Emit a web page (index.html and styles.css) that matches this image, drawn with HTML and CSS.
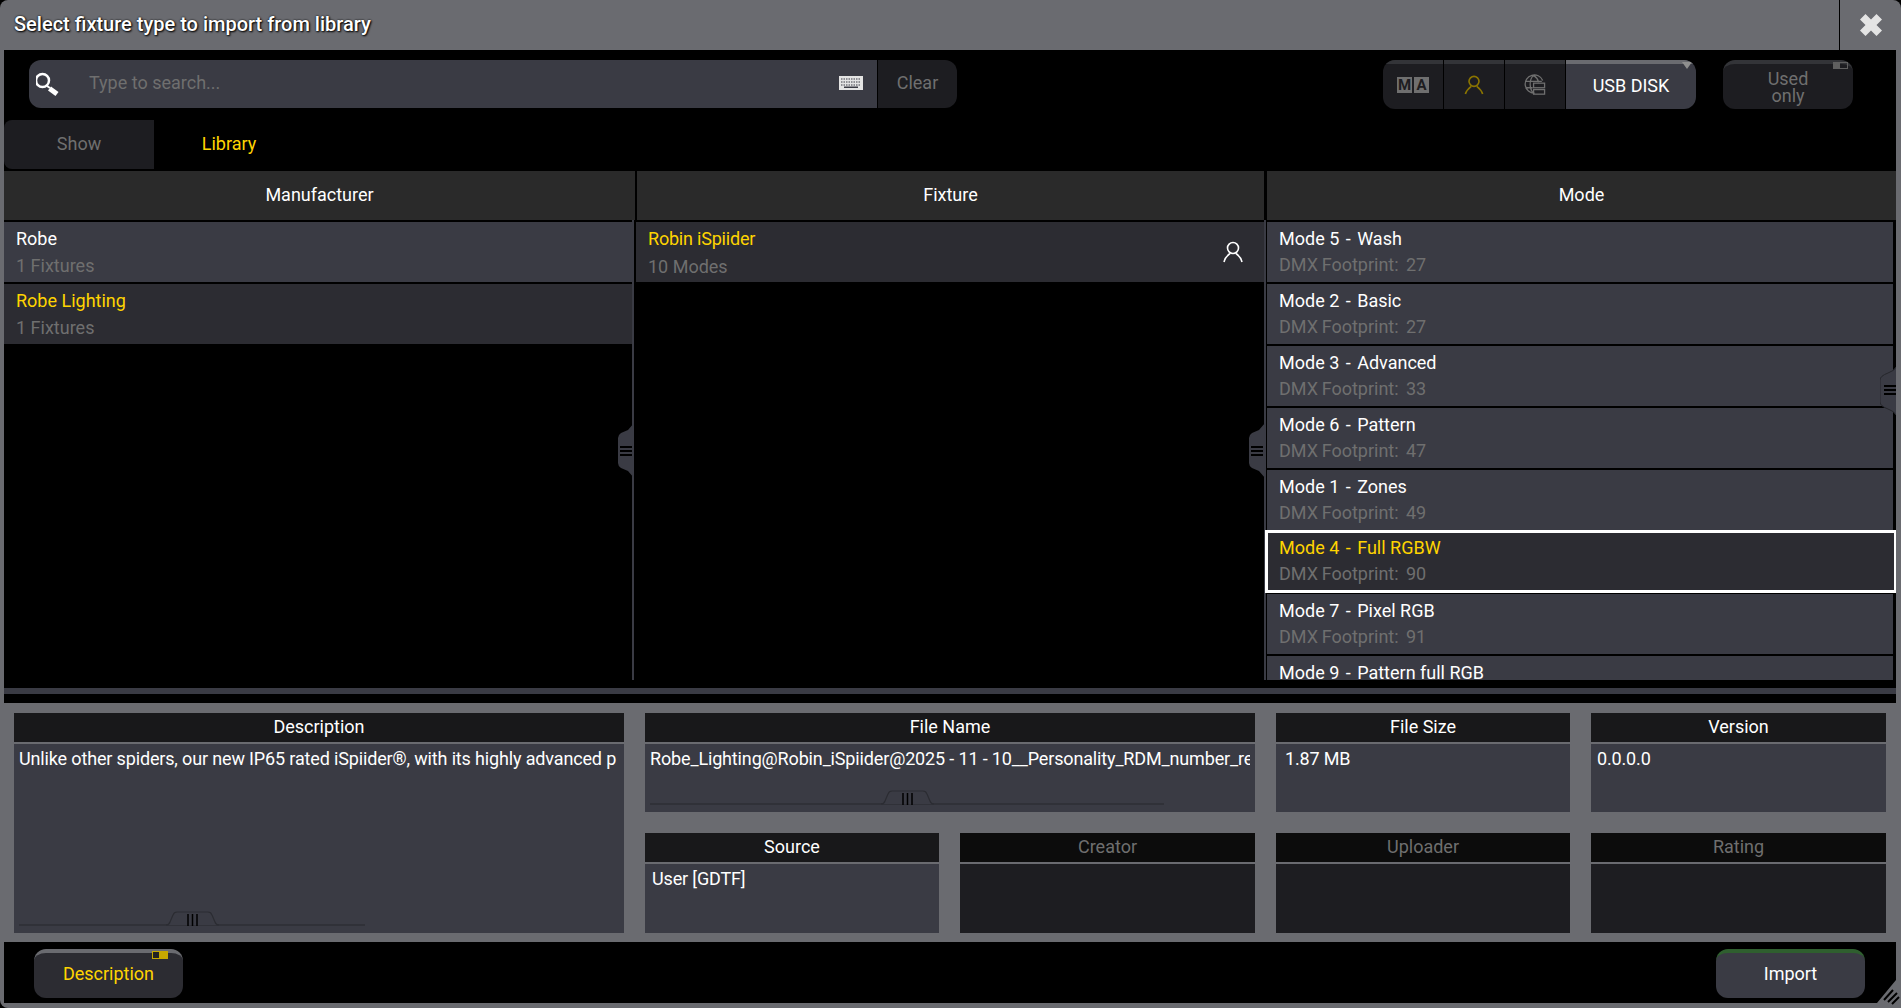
FILE: index.html
```html
<!DOCTYPE html>
<html lang="en">
<head>
    <meta charset="UTF-8">
    <meta name="viewport" content="width=device-width, initial-scale=1.0">
    <title>Select fixture type</title>
    <link rel="stylesheet" href="styles.css">
</head>
<body>
    <div class="window">
        <div class="titlebar">
            <div class="title">Select fixture type to import from library</div>
            <div class="close">
                <svg width="22" height="22" viewBox="0 0 24 24"><path d="M6 0 L12 6 L18 0 L24 6 L18 12 L24 18 L18 24 L12 18 L6 24 L0 18 L6 12 L0 6 Z" fill="#e4e4e4"/></svg>
            </div>
        </div>

        <div class="content">
            <!-- Search and source selector -->
            <div class="toolbar">
                <div class="search">
                    <div class="search-field">
                        <svg class="search-icon" width="24" height="26" viewBox="0 0 24 26"><circle cx="6.500" cy="9.500" r="6.500" fill="none" stroke="#fff" stroke-width="2.500"/><path d="M11 15 L14 17" stroke="#fff" stroke-width="2"/><path d="M13.500 17.500 L21 23" stroke="#fff" stroke-width="5"/></svg>
                        <span class="placeholder">Type to search...</span>
                        <svg class="keyboard" width="24" height="14" viewBox="0 0 24 14">
                            <rect width="24" height="14" fill="#e4e4e4"/>
                            <path d="M2 3 H22 M2 6 H22 M2 9 H22" stroke="#3a3b44" stroke-width="1" stroke-dasharray="1.500 1"/>
                            <rect x="5" y="10.500" width="14" height="1.500" fill="#3a3b44"/>
                        </svg>
                    </div>
                    <div class="clear">Clear</div>
                </div>
                <div class="sources">
                    <div class="source source-ma"><span class="ma-box">M</span><span class="ma-box">A</span></div>
                    <div class="source">
                        <svg width="20" height="20" viewBox="0 0 22 22" fill="none" stroke="#8a7400" stroke-width="1.800"><circle cx="11" cy="7" r="5.500"/><path d="M1.500 21 C3 16 6 14 8 12.500 M20.500 21 C19 16 16 14 14 12.500"/></svg>
                    </div>
                    <div class="source source-globe">
                        <svg width="23" height="22" viewBox="0 0 24 24" fill="none" stroke="#6f6f6f" stroke-width="1.400"><path d="M12 21 A10 10 0 1 1 21 7 M2 8 H20 M2 15 H10 M11 1.500 C6 6 6 16 11 21 M11 1.500 C15 4 16 7 16.500 9"/><rect x="11" y="10" width="12" height="5"/><rect x="11" y="17" width="12" height="5"/></svg>
                    </div>
                    <div class="source source-usb">USB DISK<span class="dropdown-mark"></span></div>
                </div>
                <div class="used-only">Used<br>only<span class="toggle-mark"></span></div>
            </div>

            <!-- Show and library tabs -->
            <div class="tabs">
                <div class="tab">Show</div>
                <div class="tab tab-active">Library</div>
            </div>

            <!-- Manufacturer, fixture and mode lists -->
            <div class="lists">
                <div class="col col-manufacturer">
                    <div class="col-head">Manufacturer</div>
                    <div class="row"><div class="row-name">Robe</div><div class="row-sub">1 Fixtures</div></div>
                    <div class="row row-current"><div class="row-name">Robe Lighting</div><div class="row-sub">1 Fixtures</div></div>
                    <svg class="handle" width="16" height="55" viewBox="0 0 16 55">
                        <path d="M16 0 L10 7 L3 10 Q0 12 0 15 V40 Q0 43 3 45 L10 48 L16 55 Z" fill="#3a3b44"/>
                        <path d="M2 24 H14 M2 28 H14 M2 32 H14" stroke="#000" stroke-width="2"/>
                    </svg>
                </div>
                <div class="col col-fixture">
                    <div class="col-head">Fixture</div>
                    <div class="row row-current">
                        <div class="row-name">Robin iSpiider</div><div class="row-sub">10 Modes</div>
                        <svg class="row-user" width="22" height="22" viewBox="0 0 22 22" fill="none" stroke="#fff" stroke-width="1.600"><circle cx="11" cy="7" r="5.500"/><path d="M2 21 C3 16 6 14 8 12.500 M20 21 C19 16 16 14 14 12.500"/></svg>
                    </div>
                    <svg class="handle" width="16" height="55" viewBox="0 0 16 55">
                        <path d="M16 0 L10 7 L3 10 Q0 12 0 15 V40 Q0 43 3 45 L10 48 L16 55 Z" fill="#3a3b44"/>
                        <path d="M2 24 H14 M2 28 H14 M2 32 H14" stroke="#000" stroke-width="2"/>
                    </svg>
                </div>
                <div class="col col-mode">
                    <div class="col-head">Mode</div>
                    <div class="row"><div class="row-name">Mode 5 <span class="dash">-</span> Wash</div><div class="row-sub">DMX Footprint: &nbsp;27</div></div>
                    <div class="row"><div class="row-name">Mode 2 <span class="dash">-</span> Basic</div><div class="row-sub">DMX Footprint: &nbsp;27</div></div>
                    <div class="row"><div class="row-name">Mode 3 <span class="dash">-</span> Advanced</div><div class="row-sub">DMX Footprint: &nbsp;33</div></div>
                    <div class="row"><div class="row-name">Mode 6 <span class="dash">-</span> Pattern</div><div class="row-sub">DMX Footprint: &nbsp;47</div></div>
                    <div class="row"><div class="row-name">Mode 1 <span class="dash">-</span> Zones</div><div class="row-sub">DMX Footprint: &nbsp;49</div></div>
                    <div class="row row-selected"><div class="row-name">Mode 4 <span class="dash">-</span> Full RGBW</div><div class="row-sub">DMX Footprint: &nbsp;90</div></div>
                    <div class="row"><div class="row-name">Mode 7 <span class="dash">-</span> Pixel RGB</div><div class="row-sub">DMX Footprint: &nbsp;91</div></div>
                    <div class="row"><div class="row-name">Mode 9 <span class="dash">-</span> Pattern full RGB</div></div>
                    <svg class="handle handle-mode" width="16" height="48" viewBox="0 0 16 48">
                        <path d="M16 0 Q14 4 8 6 Q0 9 0 13 V35 Q0 39 8 42 Q14 44 16 48" fill="#3a3b44" stroke="#26272c" stroke-width="1"/>
                        <path d="M4 19 H16 M4 23 H16 M4 27 H16" stroke="#000" stroke-width="2"/>
                    </svg>
                </div>
            </div>

            <div class="splitter"></div>

            <!-- Details -->
            <div class="details">
                <div class="info info-desc">
                    <div class="info-head">Description</div>
                    <div class="info-body">
                        <div class="info-text">Unlike other spiders, our new IP65 rated iSpiider®, with its highly advanced p</div>
                        <div class="scroller scroller-desc">
                            <svg class="grip" width="53" height="15" viewBox="0 0 53 15">
                                <path d="M0 14 Q3 14 4 11 L7 4 Q8 1 11 1 H42 Q45 1 46 4 L49 11 Q50 14 53 14" fill="#3a3b44" stroke="#2b2c32" stroke-width="1.200"/>
                                <path d="M22 3 V15 M26.500 3 V15 M31 3 V15" stroke="#000" stroke-width="1.500"/>
                            </svg>
                        </div>
                    </div>
                </div>
                <div class="info info-file">
                    <div class="info-head">File Name</div>
                    <div class="info-body">
                        <div class="info-text">Robe_Lighting@Robin_iSpiider@2025 - 11 - 10__Personality_RDM_number_re</div>
                        <div class="scroller scroller-file">
                            <svg class="grip" width="53" height="15" viewBox="0 0 53 15">
                                <path d="M0 14 Q3 14 4 11 L7 4 Q8 1 11 1 H42 Q45 1 46 4 L49 11 Q50 14 53 14" fill="#3a3b44" stroke="#2b2c32" stroke-width="1.200"/>
                                <path d="M22 3 V15 M26.500 3 V15 M31 3 V15" stroke="#000" stroke-width="1.500"/>
                            </svg>
                        </div>
                    </div>
                </div>
                <div class="info info-size">
                    <div class="info-head">File Size</div>
                    <div class="info-body"><div class="info-text">1.87 MB</div></div>
                </div>
                <div class="info info-version">
                    <div class="info-head">Version</div>
                    <div class="info-body"><div class="info-text">0.0.0.0</div></div>
                </div>
                <div class="info info-source">
                    <div class="info-head">Source</div>
                    <div class="info-body"><div class="info-text">User [GDTF]</div></div>
                </div>
                <div class="info info-off info-creator">
                    <div class="info-head">Creator</div>
                    <div class="info-body"></div>
                </div>
                <div class="info info-off info-uploader">
                    <div class="info-head">Uploader</div>
                    <div class="info-body"></div>
                </div>
                <div class="info info-off info-rating">
                    <div class="info-head">Rating</div>
                    <div class="info-body"></div>
                </div>
            </div>

            <!-- Bottom buttons -->
            <div class="footer">
                <div class="btn btn-desc">Description<span class="toggle-on"></span></div>
                <div class="btn btn-import">Import</div>
            </div>
        </div>
        <svg class="resize" width="26" height="28" viewBox="0 0 26 28">
            <path d="M26 0 V28 H0 V23 H2 L21 0 Z" fill="#6a6b70"/>
            <path d="M9 20 L18 10 M13 22 L22 13 M17 24 L24 17" stroke="#000" stroke-width="2"/>
        </svg>
    </div>
</body>
</html>
```
FILE: styles.css
```css
/* Basic Reset */
* {
    margin: 0;
    padding: 0;
    box-sizing: border-box;
}

html, body {
    height: 100%;
    overflow: hidden;
    background-color: #000;
}

body {
    font-family: "Roboto", "Liberation Sans", sans-serif;
    font-size: 18px;
    color: #fff;
}

/* Window */
.window {
    position: relative;
    display: flex;
    flex-direction: column;
    width: 1901px;
    height: 1008px;
    background-color: #6a6b70;
    border-radius: 8px 8px 0 8px;
    padding: 0 5px 5px 4px;
}

.titlebar {
    display: flex;
    height: 50px;
    margin-right: -5px;
    flex-shrink: 0;
}

.title {
    flex: 1;
    padding-left: 10px;
    line-height: 48px;
    font-size: 20px;
    font-weight: 500;
    text-shadow: 0 0 2px #000, 1px 1px 2px #000;
}

.close {
    width: 62px;
    display: flex;
    align-items: center;
    justify-content: center;
    border-left: 1px solid #000;
}

.content {
    flex: 1;
    display: flex;
    flex-direction: column;
    background-color: #000;
}

/* Toolbar */
.toolbar {
    display: flex;
    height: 70px;
    padding: 10px 43px 0 25px;
}

.search {
    display: flex;
    width: 928px;
    height: 48px;
}

.search-field {
    flex: 1;
    display: flex;
    align-items: center;
    background-color: #3a3b44;
    border-radius: 12px 0 0 12px;
    padding: 0 14px 0 7px;
}

.search-icon {
    margin-right: 29px;
}

.placeholder {
    flex: 1;
    margin-bottom: 3px;
    color: #6f6f6f;
}

.keyboard {
    margin-bottom: 2px;
}

.clear {
    width: 79px;
    margin-left: 1px;
    background-color: #1d1d21;
    border-radius: 0 12px 12px 0;
    color: #6f6f6f;
    line-height: 46px;
    text-align: center;
}

.sources {
    display: flex;
    margin-left: auto;
    height: 49px;
    border-radius: 12px;
    overflow: hidden;
}

.source {
    position: relative;
    display: flex;
    align-items: center;
    justify-content: center;
    width: 60px;
    margin-right: 1px;
    padding-bottom: 3px;
    background-color: #1d1d21;
    border-top: 4px solid #333438;
}

.source-ma {
    padding-bottom: 4px;
}

.source-globe {
    padding-right: 2px;
}

.source-usb {
    width: 130px;
    margin-right: 0;
    background-color: #3a3b44;
    border-top-color: #6a6b70;
}

.dropdown-mark {
    position: absolute;
    top: -2px;
    right: 4px;
    border-left: 5px solid transparent;
    border-right: 5px solid transparent;
    border-top: 7px solid #8f8f8f;
}

.ma-box {
    width: 15px;
    height: 16px;
    margin: 0 1px;
    background-color: #6f6f6f;
    color: #1d1d21;
    font-size: 15px;
    font-weight: 700;
    line-height: 16px;
    text-align: center;
}

.used-only {
    position: relative;
    width: 130px;
    height: 49px;
    margin-left: 27px;
    padding-top: 6px;
    background-color: #1d1d21;
    border-top: 4px solid #333438;
    border-radius: 12px;
    color: #6f6f6f;
    line-height: 17px;
    text-align: center;
}

.toggle-mark {
    position: absolute;
    top: -2px;
    right: 5px;
    width: 15px;
    height: 7px;
    border: 1px solid #5f5f5f;
    border-left-width: 7px;
}

/* Tabs */
.tabs {
    display: flex;
    height: 49px;
    margin-bottom: 2px;
}

.tab {
    width: 150px;
    line-height: 48px;
    text-align: center;
    color: #6f6f6f;
    background-color: #1d1d21;
    border-radius: 8px 0 0 8px;
}

.tab-active {
    background: none;
    color: #ffd400;
}

/* Lists */
.lists {
    display: flex;
    height: 509px;
    overflow: hidden;
}

.col {
    position: relative;
    display: flex;
    flex-direction: column;
    gap: 2px;
}

.col-manufacturer {
    width: 630px;
    border-right: 2px solid #3a3b44;
}

.col-fixture {
    width: 632px;
    border-right: 2px solid #3a3b44;
}

.col-mode {
    flex: 1;
}

.col-head {
    flex-shrink: 0;
    height: 49px;
    background-color: #2a2a2a;
    line-height: 47px;
    text-align: center;
}

.col-manufacturer .col-head {
    margin-right: -3px;
}

.col-fixture .col-head {
    margin: 0 -2px 0 3px;
    border-right: 2px solid #000;
}

.col-mode .col-head {
    margin-left: 1px;
}

.row {
    position: relative;
    flex-shrink: 0;
    height: 60px;
    padding: 6px 12px 0;
    background-color: #3a3b44;
}

.col-fixture .row {
    margin-left: 2px;
}

.col-fixture .row-name {
    letter-spacing: -0.2px;
}

.col-fixture .row-sub {
    margin-top: 7px;
}

.col-mode .row {
    margin: 0 3px 0 1px;
}

.row-current {
    background-color: #2c2c32;
}

.row-current .row-name,
.row-selected .row-name {
    color: #ffd400;
}

.row-name {
    line-height: 22px;
}

.dash {
    margin: 0 2px;
}

.row-sub {
    margin-top: 6px;
    line-height: 20px;
    color: #6f6f6f;
}

.col-mode .row-sub {
    margin-top: 5px;
    word-spacing: -0.8px;
}

.row-user {
    position: absolute;
    top: 19px;
    right: 20px;
}

.col-mode .row.row-selected {
    margin: -2px -1px -1px -1px;
    height: 63px;
    padding: 4px 11px 0;
    background-color: #2c2c32;
    border: 3px solid #fff;
}

.handle {
    position: absolute;
    top: 252px;
    right: -2px;
}

.col-fixture .handle {
    right: -1px;
}

.handle-mode {
    top: 196px;
    right: 0;
}

/* Splitter */
.splitter {
    flex-shrink: 0;
    height: 6px;
    margin-top: 8px;
    background-color: #3a3b44;
}

/* Details */
.details {
    display: grid;
    grid-template-columns: 610px 294px 295px 294px 295px;
    grid-template-rows: 99px 100px;
    gap: 21px;
    height: 239px;
    margin: 9px -5px 0 -4px;
    padding: 10px 15px 9px 14px;
    background-color: #6a6b70;
    flex-shrink: 0;
}

.info {
    display: flex;
    flex-direction: column;
    min-width: 0;
}

.info-desc {
    grid-column: 1;
    grid-row: 1 / 3;
}

.info-file {
    grid-column: 2 / 4;
}

.info-source {
    grid-column: 2;
    grid-row: 2;
}

.info-creator {
    grid-column: 3;
    grid-row: 2;
}

.info-uploader {
    grid-column: 4;
    grid-row: 2;
}

.info-rating {
    grid-column: 5;
    grid-row: 2;
}

.info-head {
    flex-shrink: 0;
    height: 29px;
    margin-bottom: 2px;
    background-color: #18181a;
    line-height: 27px;
    text-align: center;
}

.info-body {
    position: relative;
    flex: 1;
    padding: 4px 5px;
    background-color: #3a3b44;
    overflow: hidden;
}

.info-source .info-body {
    padding-left: 7px;
}

.info-size .info-body {
    padding-left: 9px;
}

.info-version .info-body {
    padding-left: 6px;
}

.info-text {
    white-space: nowrap;
    overflow: hidden;
    letter-spacing: -0.15px;
}

.info-off .info-head {
    background-color: #0c0c0c;
    color: #6f6f6f;
}

.info-off .info-body {
    background-color: #1d1d21;
}

/* Scrollers */
.scroller {
    position: absolute;
    left: 5px;
    bottom: 7px;
    height: 2px;
    background-color: #303138;
}

.scroller-desc {
    width: 346px;
}

.scroller-file {
    width: 514px;
}

.grip {
    position: absolute;
    bottom: 0;
}

.scroller-desc .grip {
    left: 147px;
}

.scroller-file .grip {
    left: 231px;
}

/* Footer */
.footer {
    flex: 1;
    display: flex;
    justify-content: space-between;
    padding: 7px 31px 0 30px;
}

.btn {
    position: relative;
    width: 149px;
    height: 49px;
    border-radius: 12px;
    background-color: #3a3b44;
    line-height: 42px;
    text-align: center;
}

.btn-desc {
    background-color: #2c2c32;
    border-top: 4px solid #6a6b70;
    color: #ffd400;
}

.toggle-on {
    position: absolute;
    top: -2px;
    right: 15px;
    width: 16px;
    height: 8px;
    background: linear-gradient(to right, #222 45%, #c7a800 45%);
    border: 1px solid #c7a800;
}

.btn-import {
    border-top: 4px solid #2f5f2f;
}

.resize {
    position: absolute;
    right: 0;
    bottom: 0;
}
```
